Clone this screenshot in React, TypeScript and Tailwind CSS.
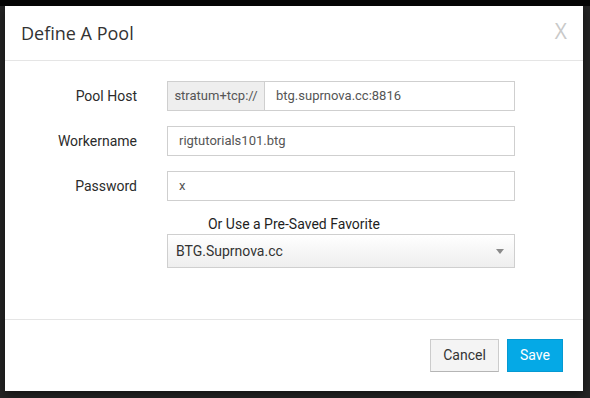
import React from 'react';

const roboto = "font-['Roboto',_'Liberation_Sans',_sans-serif]";

const FieldRow: React.FC<{ label: string; children: React.ReactNode }> = ({ label, children }) => (
  <div className="flex items-center h-[30px]">
    <div className={`w-[132px] text-right text-[14px] text-[#2b2b2b] ${roboto}`}>{label}</div>
    <div className="ml-[30px] w-[348px] h-[30px] flex">{children}</div>
  </div>
);

export default function App() {
  return (
    <div className="w-[590px] h-[398px] bg-[#242424] overflow-hidden flex flex-col">
      <div className="h-[6px] bg-[#060606] shrink-0" />
      <div className="ml-[5px] w-[578px] h-[385px] bg-white flex flex-col shadow-[0_3px_9px_rgba(0,0,0,0.5)]">
        {/* header */}
        <div className="h-[55px] shrink-0 border-b border-[#e5e5e5] flex items-center justify-between pl-4 pr-4">
          <h4 className="font-['Open_Sans',_sans-serif] text-[18px] text-[#333] leading-none">Define A Pool</h4>
          <button className="font-['Open_Sans',_sans-serif] text-[21px] text-[#c9c9c9] leading-none -mt-[3px]">X</button>
        </div>

        {/* body */}
        <div className={`flex-1 pt-[20px] flex flex-col ${roboto}`}>
          <div className="flex flex-col gap-[15px]">
            <FieldRow label="Pool Host">
              <div className="w-[98px] h-full bg-[#eeeeee] border border-[#cfcfcf] flex items-center justify-center text-[13px] text-[#555]">
                stratum+tcp://
              </div>
              <div className="flex-1 h-full border border-l-0 border-[#cfcfcf] flex items-center pl-[11px] text-[13px] text-[#555]">
                btg.suprnova.cc:8816
              </div>
            </FieldRow>
            <FieldRow label="Workername">
              <div className="flex-1 h-full border border-[#cfcfcf] flex items-center pl-[11px] text-[13px] text-[#555]">
                rigtutorials101.btg
              </div>
            </FieldRow>
            <FieldRow label="Password">
              <div className="flex-1 h-full border border-[#cfcfcf] flex items-center pl-[11px] text-[13px] text-[#555]">
                x
              </div>
            </FieldRow>
          </div>

          <div className="mt-[14px] h-[19px] flex items-center justify-center text-[14px] text-[#1f1f1f]">
            Or Use a Pre-Saved Favorite
          </div>
          <div className="ml-[162px] w-[348px] h-[34px] border border-[#cfcfcf] bg-gradient-to-b from-white to-[#eeeeee] flex items-center justify-between pl-[8px] pr-[8px]">
            <span className="text-[14px] text-[#333]">BTG.Suprnova.cc</span>
            <svg width="8" height="6" viewBox="0 0 8 6" className="mr-[2px]">
              <path d="M0 1 L8 1 L4 6 Z" fill="#8a8a8a" />
            </svg>
          </div>
        </div>

        {/* footer */}
        <div className={`h-[72px] shrink-0 border-t border-[#e5e5e5] flex items-center justify-end gap-[8px] pr-[20px] ${roboto}`}>
          <button className="w-[69px] h-[33px] bg-[#f4f4f4] border border-[#cccccc] border-b-[#b5b5b5] text-[14px] text-[#333]">
            Cancel
          </button>
          <button className="w-[56px] h-[33px] bg-[#05a9e6] border border-[#0599d2] text-[14px] text-white">
            Save
          </button>
        </div>
      </div>
    </div>
  );
}
